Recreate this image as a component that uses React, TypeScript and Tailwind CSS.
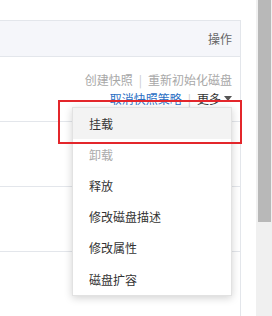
import React from "react";

const rows = [0, 1, 2];

const menuItems = [
  { label: "挂载", active: true },
  { label: "卸载", disabled: true },
  { label: "释放" },
  { label: "修改磁盘描述" },
  { label: "修改属性" },
  { label: "磁盘扩容" },
];

const Caret = () => (
  <svg width="8" height="5" viewBox="0 0 8 5" className="ml-[3px] inline-block">
    <path d="M0 0 L8 0 L4 5 Z" fill="#555" />
  </svg>
);

const App = () => {
  return (
    <div
      className="relative flex h-[316px] w-[272px] overflow-hidden bg-white text-[12px]"
      style={{ fontFamily: '"Noto Sans CJK SC", "Noto Sans", sans-serif' }}
    >
      {/* table */}
      <div className="mt-[20px] w-[241px] border-r border-t border-[#e3e6eb]">
        <div className="flex h-[36px] items-center justify-end border-b border-[#e3e6eb] bg-[#f5f6fa] pr-[8px] text-[#666]">
          操作
        </div>
        {rows.map((r) => (
          <div
            key={r}
            className="h-[65px] border-b border-[#e3e6eb] pr-[8px] pt-[13px] text-right leading-[19px]"
          >
            <div className="text-[#a8a8a8]">
              创建快照<span className="mx-[6px] text-[#ccc]">|</span>重新初始化磁盘
            </div>
            <div className="flex items-center justify-end">
              <span className="text-[#2b6fc4]">取消快照策略</span>
              <span className="mx-[6px] text-[#ccc]">|</span>
              <span className="text-[#333]">更多</span>
              <Caret />
            </div>
          </div>
        ))}
      </div>

      <div className="w-[15px]" />

      {/* scrollbar */}
      <div className="flex w-[16px] flex-col bg-[#f0f0f0] pl-[2px] pr-[1px]">
        <div className="h-[222px] bg-[#b8b8b8]" />
      </div>

      {/* dropdown menu */}
      <div className="absolute left-[72px] top-[107px] w-[160px] border border-[#e2e2e2] bg-white shadow-[0_2px_8px_rgba(0,0,0,0.18)]">
        {menuItems.map((item) => (
          <div
            key={item.label}
            className={`flex h-[31.2px] items-center pl-[16px] ${
              item.active ? "bg-[#f3f3f3] text-[#333]" : item.disabled ? "text-[#aaa]" : "text-[#333]"
            }`}
          >
            {item.label}
          </div>
        ))}
      </div>

      {/* highlight box */}
      <div className="absolute left-[58px] top-[100px] h-[44px] w-[184px] border-2 border-[#e3262b]" />
    </div>
  );
};

export default App;
